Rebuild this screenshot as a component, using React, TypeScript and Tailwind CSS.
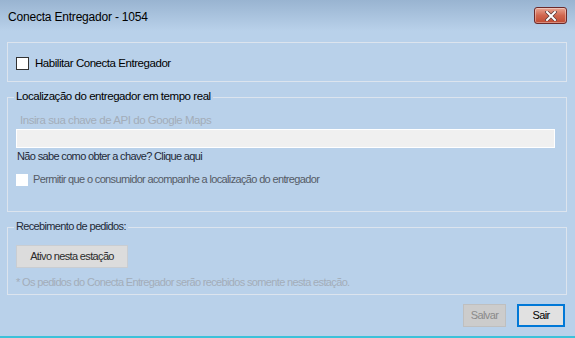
import React from "react";

const font = { fontFamily: '"Liberation Sans", Arial, sans-serif' };

const big = "text-[11.5px] tracking-[-0.45px]";
const small = "text-[11px] tracking-[-0.65px]";

function CloseBtn() {
  return (
    <div className="w-[33px] h-[17px] rounded-[3px] border border-[#6b2a2a] bg-gradient-to-b from-[#e8a593] via-[#d0664e] to-[#c04a32] flex items-center justify-center shadow-[inset_0_0_0_1px_rgba(255,255,255,0.35)]">
      <svg width="12" height="10" viewBox="0 0 12 10">
        <path d="M2 1 L10 9 M10 1 L2 9" stroke="#5a3a3a" strokeWidth="3.4" strokeLinecap="square" />
        <path d="M2 1 L10 9 M10 1 L2 9" stroke="#ffffff" strokeWidth="2" strokeLinecap="square" />
      </svg>
    </div>
  );
}

export default function App() {
  return (
    <div
      className="w-[575px] h-[338px] bg-[#b9d1ea] flex flex-col text-[12px] leading-none overflow-hidden relative"
      style={font}
    >
      {/* title bar */}
      <div className="h-[31px] shrink-0 flex items-start justify-between pl-[8px] pr-[8px] bg-gradient-to-b from-[#99b4d1] to-[#b9d1ea]">
        <span className="mt-[11px] text-[12px] text-black tracking-[-0.2px]">Conecta Entregador - 1054</span>
        <div className="mt-[7px]">
          <CloseBtn />
        </div>
      </div>

      {/* client */}
      <div className="flex-1 flex flex-col pl-[7px] pr-[8px] pt-[11px]">
        {/* group 1 */}
        <div className="h-[40px] border border-[#dce4ee] flex items-center pl-[8px] pt-[3px]">
          <div className="w-[13px] h-[13px] border border-[#333] bg-white" />
          <span className={`ml-[6px] text-black ${big}`}>Habilitar Conecta Entregador</span>
        </div>

        {/* group 2 */}
        <div className="relative mt-[15px] h-[115px] border border-[#dce4ee] flex flex-col pl-[8px] pr-[11px]">
          <span className={`absolute -top-[7px] left-[6px] px-[2px] bg-[#b9d1ea] text-black ${big}`}>
            Localização do entregador em tempo real
          </span>
          <span className={`mt-[17px] pl-[4px] text-[#a3adb9] ${big}`}>Insira sua chave de API do Google Maps</span>
          <div className="mt-[2px] h-[19px] bg-[#f0f0f0] border border-white" />
          <span className={`mt-[3px] pl-[1px] text-[#1f2a38] ${small}`}>Não sabe como obter a chave? Clique aqui</span>
          <div className="mt-[12px] flex items-center">
            <div className="w-[12px] h-[12px] bg-white" />
            <span className={`ml-[5px] text-[#555b66] ${small}`}>
              Permitir que o consumidor acompanhe a localização do entregador
            </span>
          </div>
        </div>

        {/* group 3 */}
        <div className="relative mt-[15px] h-[68px] border border-[#dce4ee] flex flex-col pl-[8px]">
          <span className={`absolute -top-[7px] left-[6px] px-[2px] bg-[#b9d1ea] text-[#1f2a38] ${small}`}>
            Recebimento de pedidos:
          </span>
          <div className={`mt-[17px] w-[112px] h-[23px] bg-[#dcdcdc] border border-[#c9cdd2] flex items-center justify-center text-[#2b2b2b] ${small}`}>
            Ativo nesta estação
          </div>
          <span className={`mt-[9px] text-[#a3adb9] ${small}`}>
            * Os pedidos do Conecta Entregador serão recebidos somente nesta estação.
          </span>
        </div>

        {/* buttons */}
        <div className="mt-[9px] flex justify-end gap-[11px] pr-[2px]">
          <div className={`w-[43px] h-[23px] bg-[#cccccc] border border-[#bfbfbf] flex items-center justify-center text-[#8a8a8a] ${small}`}>
            Salvar
          </div>
          <div className={`w-[48px] h-[23px] bg-[#e1e1e1] border-2 border-[#0078d7] flex items-center justify-center text-black ${small}`}>
            Sair
          </div>
        </div>
      </div>

      <div className="absolute left-0 right-0 bottom-0 h-[2px] bg-[#3cc1d9]" />
    </div>
  );
}
